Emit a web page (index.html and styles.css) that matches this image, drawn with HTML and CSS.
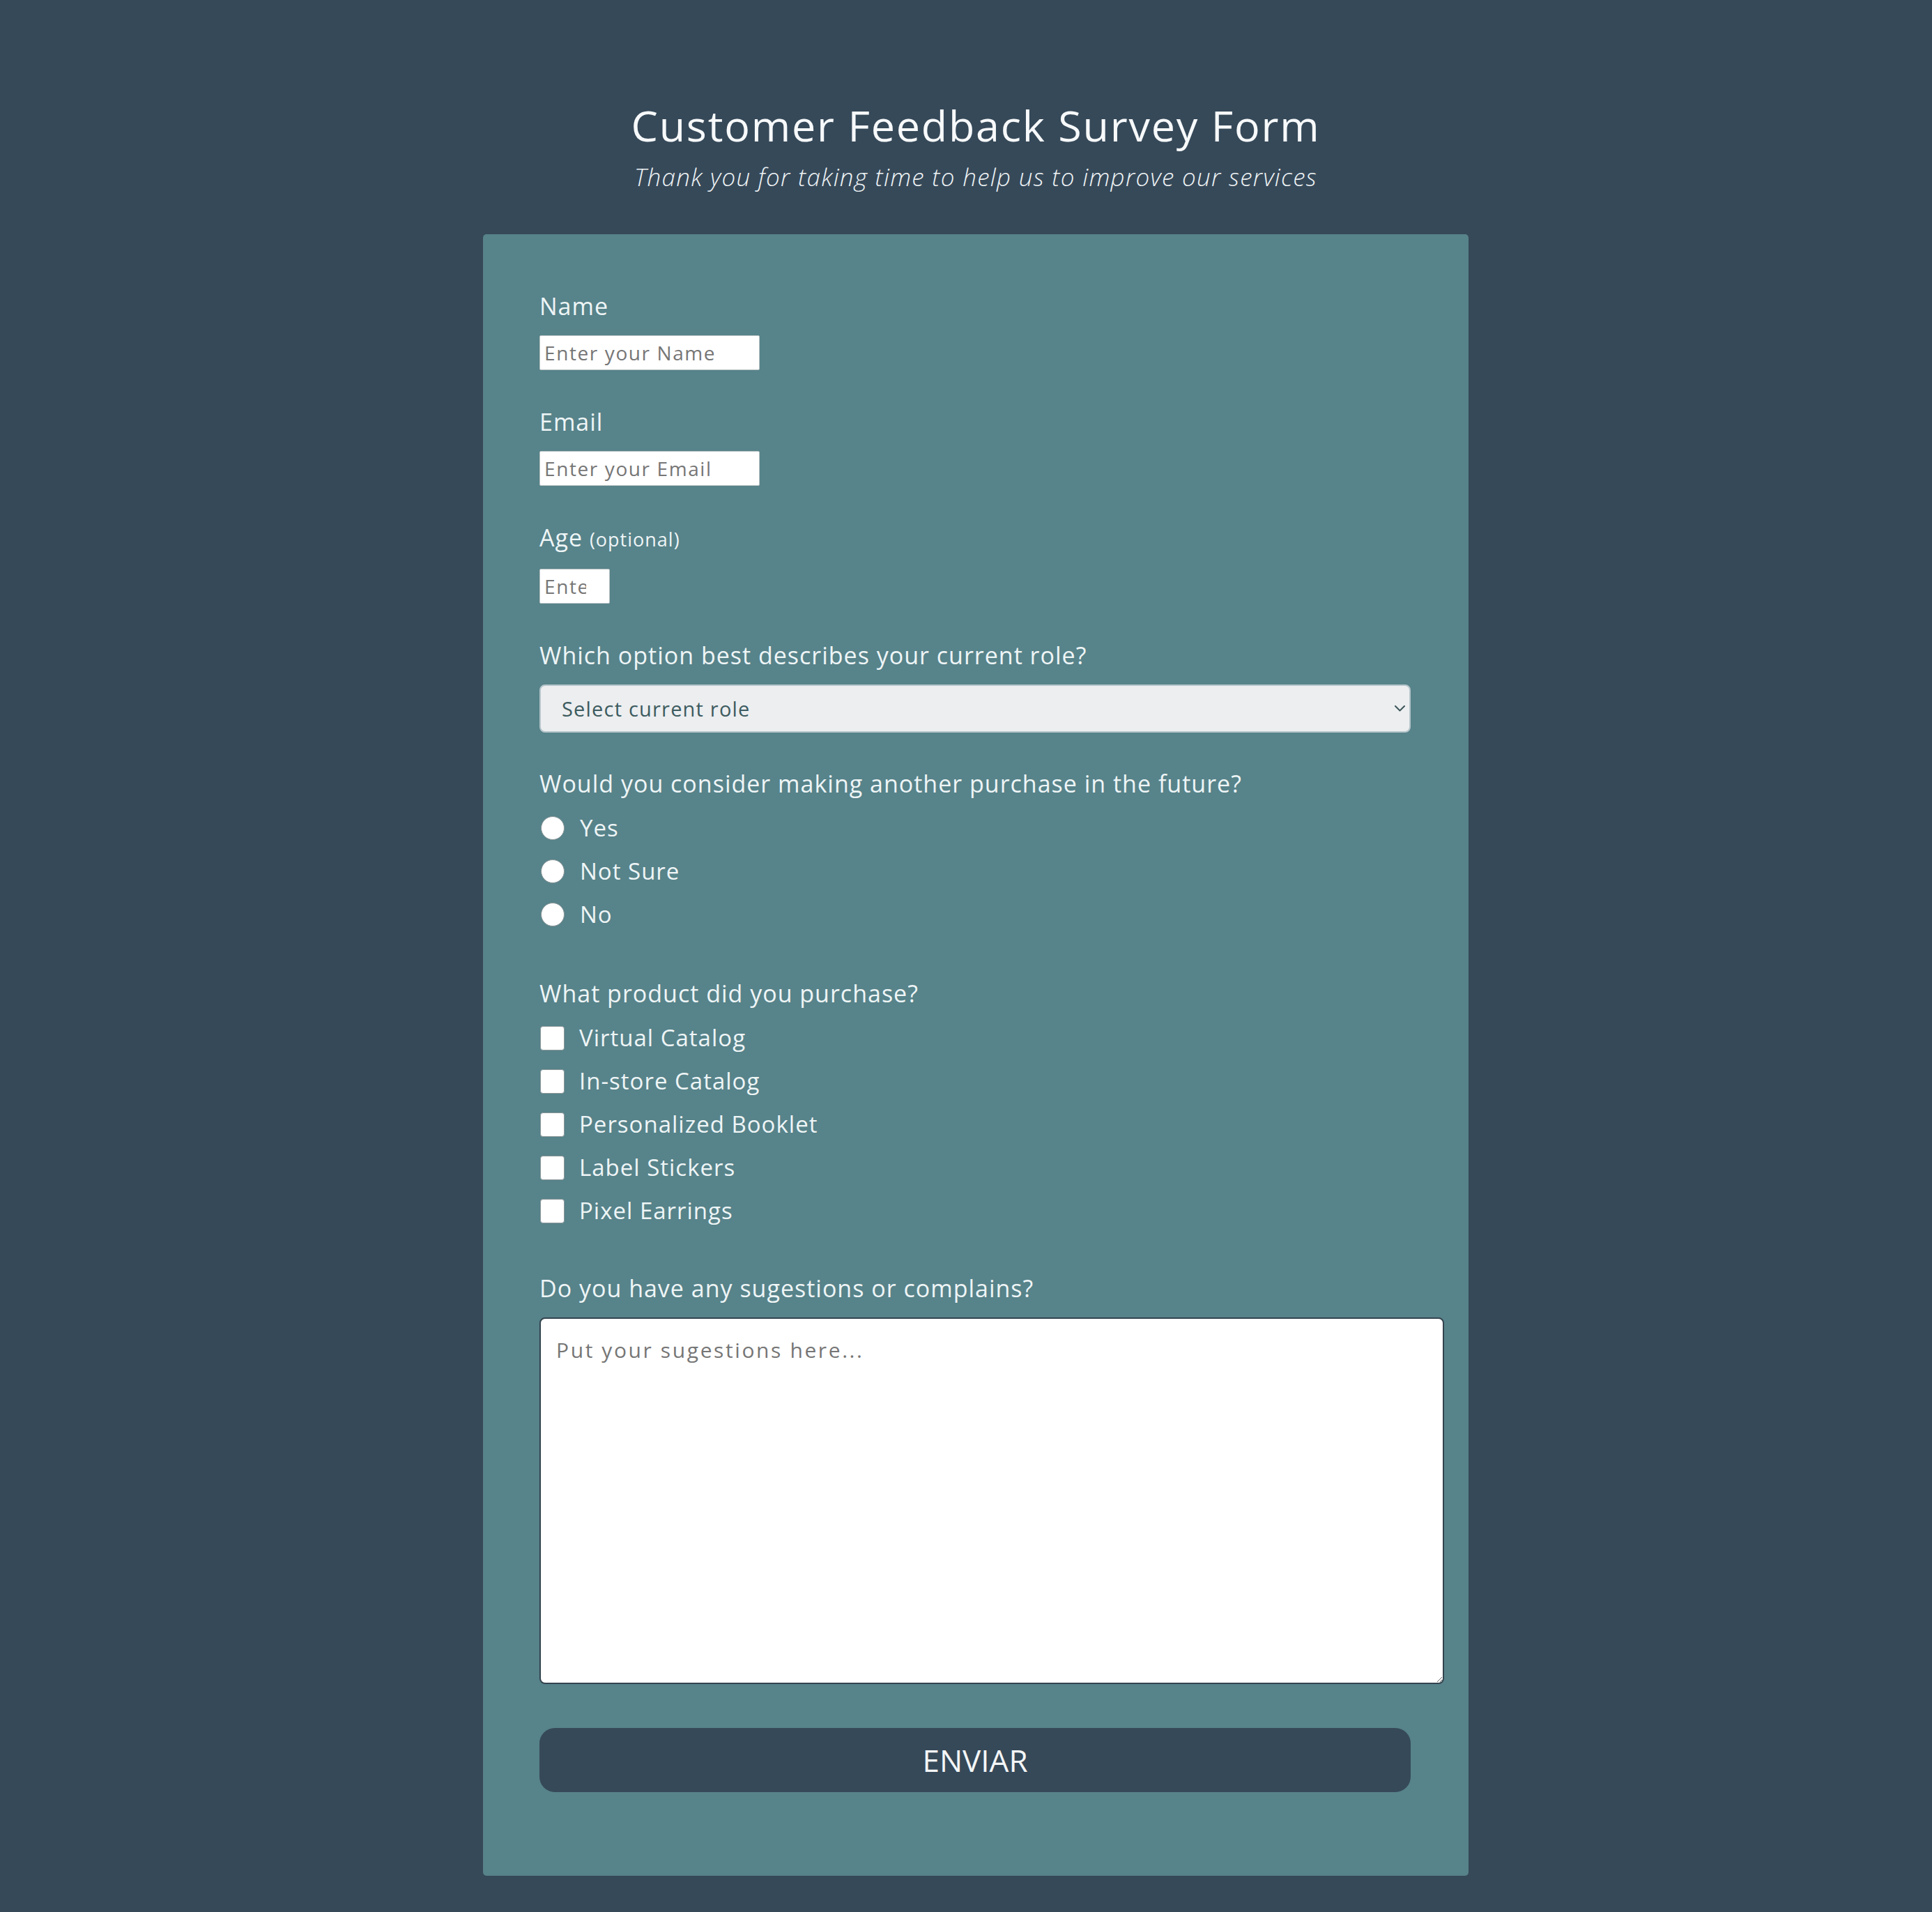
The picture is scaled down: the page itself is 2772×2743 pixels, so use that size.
FILE: index.html
```html
<!DOCTYPE html>
<html lang="en">
<head>
<meta charset="utf-8">
<title>Customer Feedback Survey Form</title>
<link rel="stylesheet" href="styles.css">
</head>
<body>
<main class="page">
  <header class="header">
    <h1 class="title">Customer Feedback Survey Form</h1>
    <p class="subtitle">Thank you for taking time to help us to improve our services</p>
  </header>
  <form class="card">
    <div class="group">
      <label class="label" for="name">Name</label>
      <input class="text-input" id="name" type="text" placeholder="Enter your Name">
    </div>
    <div class="group">
      <label class="label" for="email">Email</label>
      <input class="text-input" id="email" type="email" placeholder="Enter your Email">
    </div>
    <div class="group">
      <label class="label" for="age">Age <span class="optional">(optional)</span></label>
      <input class="text-input age-input" id="age" type="number" placeholder="Enter your age">
    </div>
    <div class="group">
      <label class="label" for="role">Which option best describes your current role?</label>
      <div class="select-wrap">
        <select class="select" id="role">
          <option>Select current role</option>
        </select>
        <svg class="chevron" width="15" height="9" viewBox="0 0 15 9"><path d="M1 1 L7.5 7.5 L14 1" fill="none" stroke="#3d5558" stroke-width="2" stroke-linecap="round" stroke-linejoin="round"/></svg>
      </div>
    </div>
    <div class="group group-after-select">
      <p class="label">Would you consider making another purchase in the future?</p>
      <div class="options">
        <label class="option"><input class="radio" type="radio" name="again"><span>Yes</span></label>
        <label class="option"><input class="radio" type="radio" name="again"><span>Not Sure</span></label>
        <label class="option"><input class="radio" type="radio" name="again"><span>No</span></label>
      </div>
    </div>
    <div class="group group-after-radio">
      <p class="label">What product did you purchase?</p>
      <div class="options">
        <label class="option"><input class="check" type="checkbox"><span>Virtual Catalog</span></label>
        <label class="option"><input class="check" type="checkbox"><span>In-store Catalog</span></label>
        <label class="option"><input class="check" type="checkbox"><span>Personalized Booklet</span></label>
        <label class="option"><input class="check" type="checkbox"><span>Label Stickers</span></label>
        <label class="option"><input class="check" type="checkbox"><span>Pixel Earrings</span></label>
      </div>
    </div>
    <div class="group group-after-check">
      <label class="label" for="sugg">Do you have any sugestions or complains?</label>
      <textarea class="textarea" id="sugg" placeholder="Put your sugestions here..."></textarea>
    </div>
    <button class="submit" type="submit">ENVIAR</button>
  </form>
</main>
</body>
</html>
```

FILE: styles.css
```css
html {
  background: #364959;
}
body {
  margin: 0;
  padding: 0 0 55px 28px;
  background: #364959;
  font-family: "Open Sans", "Noto Sans", sans-serif;
  color: #eef5f6;
}
.page {
  display: flex;
  flex-direction: column;
  align-items: center;
}
.header {
  display: flex;
  flex-direction: column;
  align-items: center;
  padding-top: 144px;
}
.title {
  margin: 0;
  font-size: 61px;
  line-height: 72px;
  font-weight: 500;
  letter-spacing: 1.8px;
  color: #f7f9fa;
}
.subtitle {
  margin: 18px 0 0;
  font-size: 35px;
  line-height: 40px;
  font-style: italic;
  font-weight: 300;
  letter-spacing: 1.3px;
  color: #eef3f5;
}
.card {
  margin-top: 62px;
  width: 1250px;
  padding: 83px 83px 120px 81px;
  background: #57838a;
  border-radius: 5px;
  display: flex;
  flex-direction: column;
}
.group {
  display: flex;
  flex-direction: column;
  align-items: flex-start;
}
.group + .group {
  margin-top: 54px;
}
.group.group-after-select {
  margin-top: 53px;
}
.group.group-after-radio {
  margin-top: 62px;
}
.group.group-after-check {
  margin-top: 60px;
}
.label {
  margin: 0;
  font-size: 34px;
  line-height: 40px;
  font-weight: 500;
  letter-spacing: 1px;
  color: #eef5f6;
}
.optional {
  font-size: 27px;
  font-weight: 400;
  letter-spacing: 1px;
}
.text-input {
  margin-top: 22px;
  box-sizing: border-box;
  width: 316px;
  height: 50px;
  padding: 0 6px;
  border: 1px solid #b9c2c4;
  border-radius: 2px;
  background: #fff;
  font-family: "Open Sans", "Noto Sans", sans-serif;
  font-size: 28px;
  letter-spacing: 1.6px;
  color: #333;
  outline: none;
}
.text-input::placeholder {
  color: #767676;
}
.age-input {
  width: 101px;
  padding-right: 18px;
  -moz-appearance: textfield;
}
.select-wrap {
  position: relative;
  margin-top: 22px;
  width: 100%;
}
.select {
  display: block;
  box-sizing: border-box;
  width: 100%;
  height: 69px;
  padding: 0 30px;
  appearance: none;
  -webkit-appearance: none;
  background: #eceef0;
  border: 2px solid #b6c6cb;
  border-radius: 8px;
  font-family: "Open Sans", "Noto Sans", sans-serif;
  font-size: 29px;
  letter-spacing: 1.2px;
  color: #3c5b5f;
}
.chevron {
  position: absolute;
  right: 8px;
  top: 30px;
}
.options {
  margin-top: 13px;
  display: flex;
  flex-direction: column;
}
.option {
  display: flex;
  align-items: center;
  height: 62px;
  font-size: 33px;
  line-height: 40px;
  font-weight: 500;
  letter-spacing: 1px;
  color: #eef5f6;
}
.radio {
  appearance: none;
  -webkit-appearance: none;
  box-sizing: border-box;
  width: 34px;
  height: 34px;
  margin: 0 22px 0 2px;
  border-radius: 50%;
  background: #fff;
  border: 1px solid #8b9799;
}
.check {
  appearance: none;
  -webkit-appearance: none;
  box-sizing: border-box;
  width: 35px;
  height: 35px;
  margin: 0 21px 0 1px;
  border-radius: 4px;
  background: #fff;
  border: 1px solid #8b9799;
}
.textarea {
  margin-top: 22px;
  width: 100%;
  height: 471px;
  padding: 26px 22px 25px;
  border: 2px solid #33444f;
  border-radius: 8px;
  background: #fff;
  font-family: "Open Sans", "Noto Sans", sans-serif;
  font-size: 30px;
  line-height: 38px;
  letter-spacing: 2.6px;
  color: #333;
  outline: none;
}
.textarea::placeholder {
  color: #767676;
}
.submit {
  margin-top: 63px;
  width: 100%;
  height: 92px;
  border: none;
  border-radius: 22px;
  background: #364959;
  color: #f4f6f7;
  font-family: "Open Sans", "Noto Sans", sans-serif;
  font-size: 44px;
  font-weight: 400;
  cursor: pointer;
}
```
